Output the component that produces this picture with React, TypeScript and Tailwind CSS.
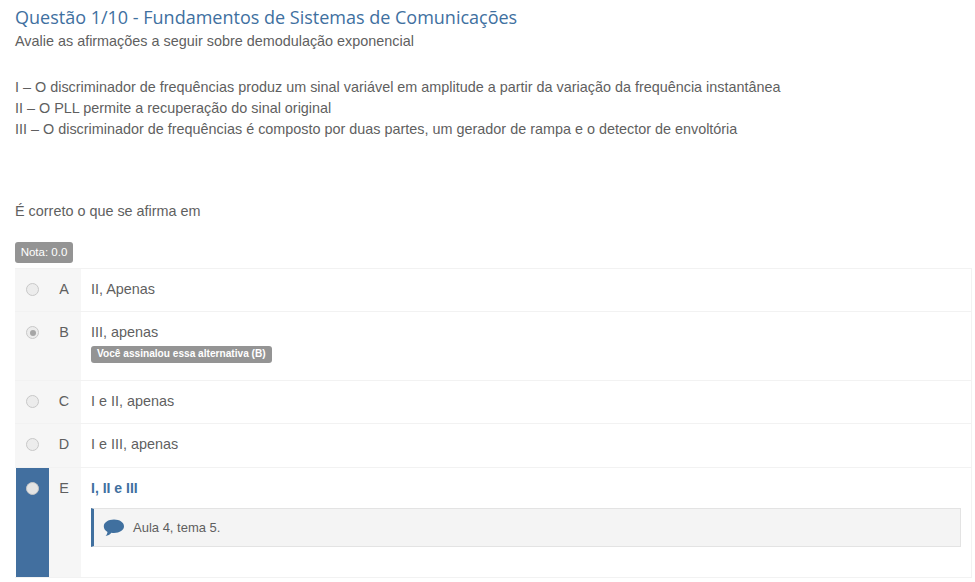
import React from "react";

function Radio({ checked = false, active = false }: { checked?: boolean; active?: boolean }) {
  return (
    <span className={`flex h-[13px] w-[13px] items-center justify-center rounded-full border-[1.5px] border-[#c8c8c8] ${active ? "bg-[#e4e4e4]" : "bg-[#ececec]"}`}>
      {checked && <span className="h-[6px] w-[6px] rounded-full bg-[#a6a6a6]" />}
    </span>
  );
}

function Row({
  letter,
  height,
  children,
  checked,
  active,
}: {
  letter: string;
  height: string;
  children: React.ReactNode;
  checked?: boolean;
  active?: boolean;
}) {
  return (
    <div className={`flex border-b border-[#f2f2f2] ${height}`}>
      <div className={`w-[34px] shrink-0 pt-[14px] ${active ? "border-l border-white bg-[#426f9f] pl-[10px]" : "bg-[#f6f6f6] pl-[11px]"}`}>
        <Radio checked={checked} active={active} />
      </div>
      <div className="w-[32px] shrink-0 bg-[#f6f6f6] pr-[2px] pt-[10px] text-center text-[14.4px] leading-[20px] text-[#5f5f5f]">{letter}</div>
      <div className="min-w-0 flex-1 pl-[10px] pr-[10px] pt-[10px] text-[14.4px] leading-[20px] text-[#5f5f5f]">{children}</div>
    </div>
  );
}

export default function App() {
  return (
    <div className="h-[582px] w-[975px] overflow-hidden bg-white pl-[15px] pr-[3px] font-['Liberation_Sans',Arial,sans-serif] text-[14.4px] text-[#5f5f5f]">
      <h3 className="pt-[6px] font-['Open_Sans',sans-serif] text-[18px] leading-[22px] font-normal text-[#40709f]">
        Questão 1/10 - Fundamentos de Sistemas de Comunicações
      </h3>
      <p className="mt-[3px] leading-[21px]">Avalie as afirmações a seguir sobre demodulação exponencial</p>
      <div className="mt-[25px] leading-[21px]">
        <p>I – O discriminador de frequências produz um sinal variável em amplitude a partir da variação da frequência instantânea</p>
        <p>II – O PLL permite a recuperação do sinal original</p>
        <p>III – O discriminador de frequências é composto por duas partes, um gerador de rampa e o detector de envoltória</p>
      </div>
      <p className="mt-[61px] leading-[21px]">É correto o que se afirma em</p>
      <span className="mt-[20px] flex h-[21px] w-[58px] items-center justify-center rounded-[3px] bg-[#949494] text-[11.5px] text-white">Nota: 0.0</span>
      <div className="mt-[5px] border-t border-r border-[#f2f2f2]">
        <Row letter="A" height="h-[43px]">II, Apenas</Row>
        <Row letter="B" height="h-[69px]" checked>
          <div>III, apenas</div>
          <span className="mt-[3px] inline-flex h-[17px] items-center rounded-[3px] bg-[#949494] px-[6px] text-[10.15px] font-bold text-white">
            Você assinalou essa alternativa (B)
          </span>
        </Row>
        <Row letter="C" height="h-[43px]">I e II, apenas</Row>
        <Row letter="D" height="h-[44px]">I e III, apenas</Row>
        <Row letter="E" height="h-[110px]" active>
          <div className="text-[14px] font-bold text-[#40709f]">I, II e III</div>
          <div className="mt-[10px] flex h-[39px] items-center border border-l-[3px] border-[#e3e3e3] border-l-[#40709f] bg-[#f4f4f4] pl-[9px]">
            <svg width="22" height="19" viewBox="0 0 22 19" className="shrink-0" aria-hidden="true">
              <path d="M11 1.5c5.700 0 10 2.900 10 6.700s-4.300 6.700-10 6.700c-.9 0-1.800-.1-2.600-.2C6.900 16.400 5 17.600 2.600 18c.8-.9 1.700-2.200 1.900-4.100C2 12.600.800 10.600.800 8.200.800 4.400 5.300 1.500 11 1.500z" fill="#40709f" />
            </svg>
            <span className="ml-[8px] text-[13px] text-[#5f5f5f]">Aula 4, tema 5.</span>
          </div>
        </Row>
      </div>
    </div>
  );
}
